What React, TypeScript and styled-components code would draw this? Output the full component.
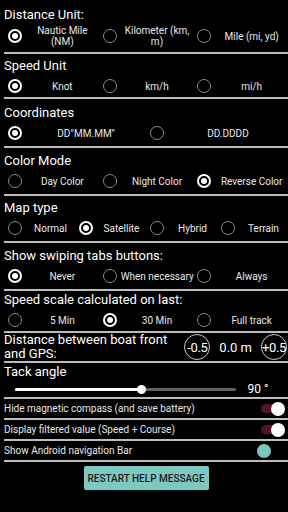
import React from "react";
import styled, { createGlobalStyle } from "styled-components";

const GlobalStyle = createGlobalStyle`
    html, body {
        margin: 0;
        padding: 0;
        background: #000;
    }
    body {
        font-family: Roboto, "Noto Sans", sans-serif;
        color: #fff;
    }
`;

const Screen = styled.div`
    width: 288px;
    height: 512px;
    box-sizing: border-box;
    padding-left: 4px;
    background: #000;
    overflow: hidden;
    display: flex;
    flex-direction: column;
`;

const Section = styled.section<{ $top: number; $bottom: number }>`
    padding-top: ${(p) => p.$top}px;
    padding-bottom: ${(p) => p.$bottom}px;
    border-bottom: 2px solid #bdbdbd;
`;

const Title = styled.div`
    font-size: 13px;
    line-height: 18px;
    color: #fff;
`;

const Options = styled.div<{ $cols: number; $height: number }>`
    display: grid;
    grid-template-columns: repeat(${(p) => p.$cols}, 1fr);
    height: ${(p) => p.$height}px;
    align-items: center;
`;

const Option = styled.div`
    display: flex;
    align-items: center;
    min-width: 0;
`;

const Radio = styled.span<{ $checked?: boolean }>`
    flex: none;
    width: 14px;
    height: 14px;
    margin-left: 4px;
    box-sizing: border-box;
    border-radius: 50%;
    border: ${(p) => (p.$checked ? "2px solid #fff" : "1.5px solid #8a8a8a")};
    display: flex;
    align-items: center;
    justify-content: center;

    &::after {
        content: "";
        width: 6px;
        height: 6px;
        border-radius: 50%;
        background: ${(p) => (p.$checked ? "#fff" : "transparent")};
    }
`;

const OptionLabel = styled.span<{ $wrap?: boolean }>`
    flex: 1;
    padding-left: 4px;
    text-align: center;
    font-size: 10px;
    line-height: 11px;
    color: #e8e8e8;
    white-space: ${(p) => (p.$wrap ? "normal" : "nowrap")};
`;

const DistanceRow = styled.div`
    display: flex;
    align-items: center;
    padding-right: 1px;
`;

const TwoLineTitle = styled(Title)`
    flex: 1;
    line-height: 14px;
`;

const StepButton = styled.button`
    flex: none;
    width: 26px;
    height: 26px;
    padding: 0;
    border-radius: 50%;
    border: 1px solid #c8c8c8;
    background: transparent;
    color: #fff;
    font-family: Roboto, sans-serif;
    font-size: 13px;
    letter-spacing: -0.4px;
`;

const DistanceValue = styled.span`
    font-size: 13px;
    margin: 0 9px 0 9px;
    white-space: nowrap;
`;

const SliderRow = styled.div`
    display: flex;
    align-items: center;
    height: 16px;
`;

const Track = styled.div`
    position: relative;
    flex: none;
    margin-left: 11px;
    width: 221px;
    height: 3px;
    border-radius: 2px;
    background: #626262;
`;

const TrackFill = styled.div`
    height: 100%;
    border-radius: 2px;
    background: #fff;
`;

const Thumb = styled.span`
    position: absolute;
    top: 50%;
    width: 9px;
    height: 9px;
    margin: -4.5px 0 0 -4.5px;
    border-radius: 50%;
    background: #fff;
`;

const SliderValue = styled.span`
    flex: 1;
    padding-right: 8px;
    text-align: center;
    font-size: 12px;
    white-space: nowrap;
`;

const ToggleRow = styled.div`
    display: flex;
    align-items: center;
    height: 19px;
    border-bottom: 2px solid #bdbdbd;
    font-size: 10px;
    color: #e8e8e8;
`;

const ToggleText = styled.span`
    flex: 1;
    white-space: nowrap;
`;

const Switch = styled.span<{ $on: boolean }>`
    position: relative;
    flex: none;
    width: 28px;
    height: 14px;
    margin-right: 3px;

    &::before {
        content: "";
        position: absolute;
        left: 4px;
        right: 4px;
        top: 2.5px;
        height: 9px;
        border-radius: 5px;
        background: ${(p) => (p.$on ? "#4f1529" : "transparent")};
    }
    &::after {
        content: "";
        position: absolute;
        top: 0;
        left: ${(p) => (p.$on ? 14 : 0)}px;
        width: 14px;
        height: 14px;
        border-radius: 50%;
        background: ${(p) => (p.$on ? "#fff" : "#7ec4be")};
    }
`;

const Footer = styled.div`
    display: flex;
    justify-content: center;
    padding-top: 4px;
`;

const RestartButton = styled.button`
    width: 125px;
    height: 24px;
    border: none;
    border-radius: 2px;
    background: #7ec8c2;
    color: #1c1c1c;
    font-family: Roboto, sans-serif;
    font-size: 10px;
    font-weight: 500;
    box-shadow: 0 1px 2px rgba(255, 255, 255, 0.08);
    white-space: nowrap;
    padding: 0;
`;

type Group = {
    title: string;
    options: string[];
    checked: number;
    top: number;
    bottom: number;
    height: number;
    wrap?: boolean;
};

const groups: Group[] = [
    {
        title: "Distance Unit:",
        options: ["Nautic Mile (NM)", "Kilometer (km, m)", "Mile (mi, yd)"],
        checked: 0,
        top: 6,
        bottom: 4,
        height: 24,
        wrap: true,
    },
    { title: "Speed Unit", options: ["Knot", "km/h", "mi/h"], checked: 0, top: 3, bottom: 0, height: 22 },
    { title: "Coordinates", options: ["DD°MM.MM\"", "DD.DDDD"], checked: 0, top: 5, bottom: 2, height: 22 },
    {
        title: "Color Mode",
        options: ["Day Color", "Night Color", "Reverse Color"],
        checked: 2,
        top: 4,
        bottom: 2,
        height: 22,
    },
    {
        title: "Map type",
        options: ["Normal", "Satellite", "Hybrid", "Terrain"],
        checked: 1,
        top: 3,
        bottom: 2,
        height: 22,
    },
    {
        title: "Show swiping tabs buttons:",
        options: ["Never", "When necessary", "Always"],
        checked: 0,
        top: 4,
        bottom: 2,
        height: 22,
    },
    {
        title: "Speed scale calculated on last:",
        options: ["5 Min", "30 Min", "Full track"],
        checked: 1,
        top: 0,
        bottom: 0,
        height: 22,
    },
];

const toggles = [
    { label: "Hide magnetic compass (and save battery)", on: true },
    { label: "Display filtered value (Speed + Course)", on: true },
    { label: "Show Android navigation Bar", on: false },
];

const tack = { value: 90, min: 10, max: 150 };

const App = () => {
    const tackPct = ((tack.value - tack.min) / (tack.max - tack.min)) * 100;

    return (
        <>
            <GlobalStyle />
            <Screen>
                {groups.map((g) => (
                    <Section key={g.title} $top={g.top} $bottom={g.bottom}>
                        <Title>{g.title}</Title>
                        <Options $cols={g.options.length} $height={g.height}>
                            {g.options.map((opt, i) => (
                                <Option key={opt}>
                                    <Radio $checked={i === g.checked} />
                                    <OptionLabel $wrap={g.wrap}>{opt}</OptionLabel>
                                </Option>
                            ))}
                        </Options>
                    </Section>
                ))}

                <Section $top={0} $bottom={0}>
                    <DistanceRow>
                        <TwoLineTitle>
                            Distance between boat front
                            <br />
                            and GPS:
                        </TwoLineTitle>
                        <StepButton>-0.5</StepButton>
                        <DistanceValue>0.0 m</DistanceValue>
                        <StepButton>+0.5</StepButton>
                    </DistanceRow>
                </Section>

                <Section $top={0} $bottom={0}>
                    <Title>Tack angle</Title>
                    <SliderRow>
                        <Track>
                            <TrackFill style={{ width: `${tackPct}%` }} />
                            <Thumb style={{ left: `${tackPct}%` }} />
                        </Track>
                        <SliderValue>{tack.value} °</SliderValue>
                    </SliderRow>
                </Section>

                {toggles.map((t) => (
                    <ToggleRow key={t.label}>
                        <ToggleText>{t.label}</ToggleText>
                        <Switch $on={t.on} />
                    </ToggleRow>
                ))}

                <Footer>
                    <RestartButton>RESTART HELP MESSAGE</RestartButton>
                </Footer>
            </Screen>
        </>
    );
};

export default App;
